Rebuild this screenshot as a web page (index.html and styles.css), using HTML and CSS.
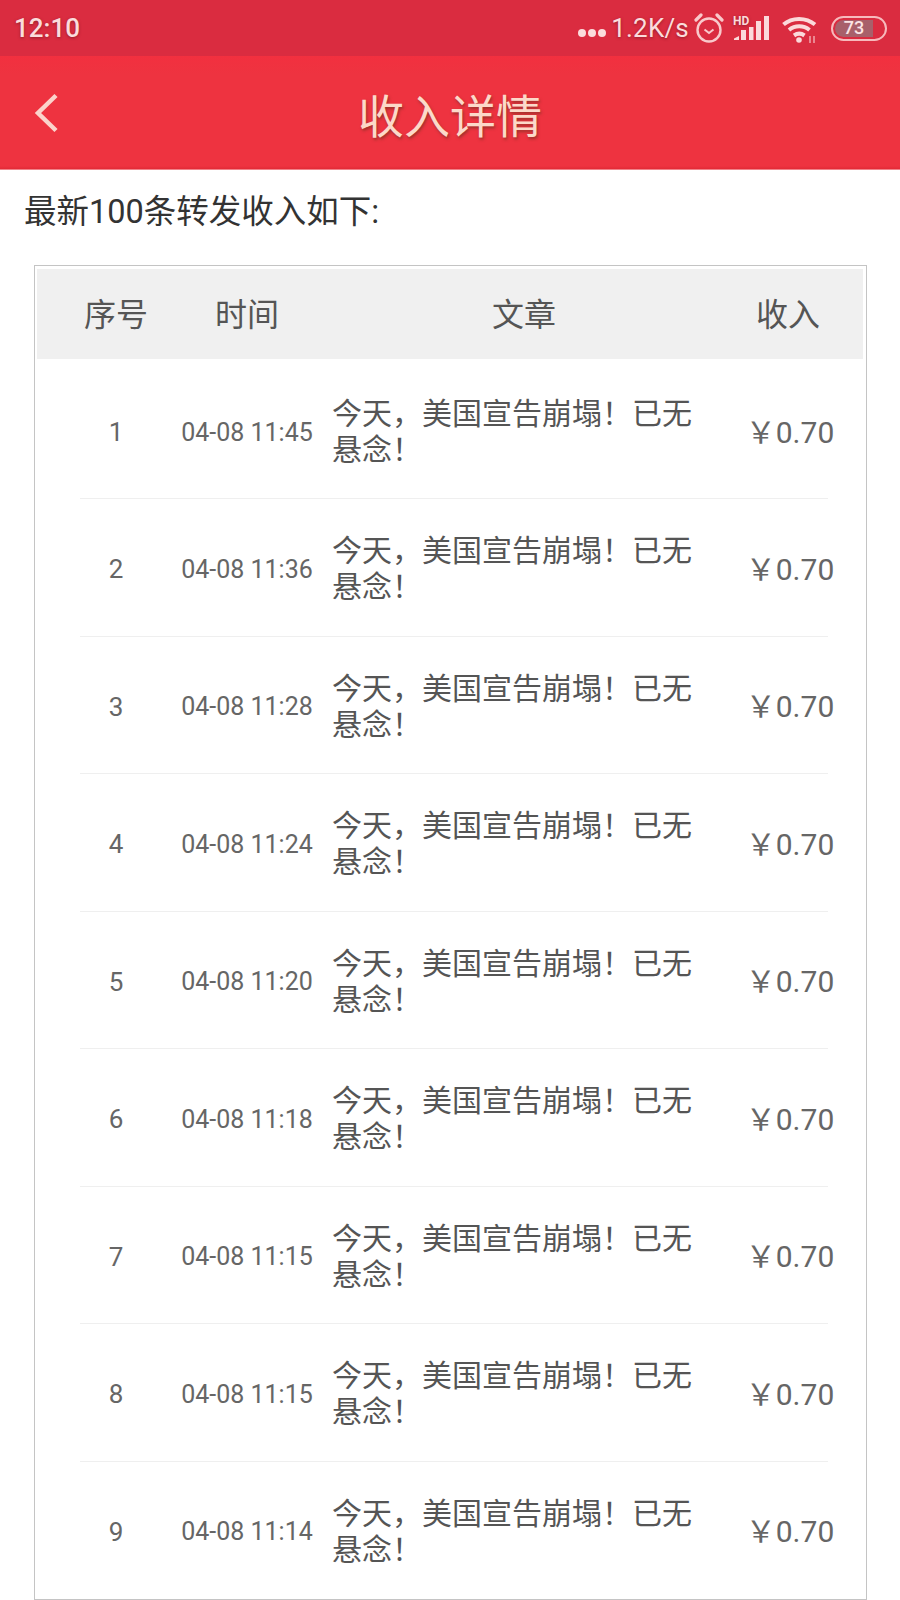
FILE: index.html
```html
<!DOCTYPE html>
<html lang="zh-CN">
<head>
<meta charset="utf-8">
<title>收入详情</title>
<link rel="stylesheet" href="styles.css">
</head>
<body>
<div class="page">
  <header class="statusbar">
    <span class="clock">12:10</span>
    <div class="status-right">
      <span class="dots"><i></i><i></i><i></i></span>
      <span class="speed">1.2K/s</span>
      <svg class="ico-alarm" width="30" height="32" viewBox="0 0 30 32" fill="none" stroke="#f9c9cb" stroke-width="2.4">
        <circle cx="15" cy="18" r="11.5"/>
        <path d="M10.5 17.5 15 21l4.500-3.500" stroke-width="2"/>
        <path d="M2 8 7 3M28 8 23 3" stroke-width="3.2" stroke-linecap="round"/>
      </svg>
      <svg class="ico-signal" width="37" height="26" viewBox="0 0 37 26" fill="#fbd9da">
        <text class="hd" x="0" y="10">HD</text>
        <path d="M1 25h5v-4l-5 2.500zM8 25h5V15H8zM16 25h4.500V12H16zM23 25h5V6h-5zM31 25h5V1h-5z"/>
      </svg>
      <svg class="ico-wifi" width="37" height="28" viewBox="0 0 37 28" fill="none" stroke="#fbd9da" stroke-width="4">
        <path d="M1.500 8.500C10 1 24 1 33 8.500"/>
        <path d="M7 14c6-5 14.500-5 20.500 0"/>
        <path d="M12 19.500c3.500-2.500 7-2.500 10.500 0"/>
        <circle cx="17" cy="24" r="2.800" fill="#fbd9da" stroke="none"/>
        <path d="M28 20v7M32 20v7" stroke-width="1.500" opacity=".7"/>
      </svg>
      <div class="battery"><span class="battery-level">73</span></div>
    </div>
  </header>

  <nav class="navbar">
    <svg class="back" width="30" height="40" viewBox="0 0 30 40" fill="none" stroke="#fbd3cb" stroke-width="4.500">
      <path d="M23 2.500 5 20l18 17.500"/>
    </svg>
    <h1 class="title">收入详情</h1>
  </nav>

  <p class="intro">最新100条转发收入如下:</p>

  <section class="table">
    <div class="thead">
      <span>序号</span>
      <span>时间</span>
      <span class="th-article">文章</span>
      <span class="th-income">收入</span>
    </div>

    <div class="row"><span class="num">1</span><span class="time">04-08 11:45</span><span class="article">今天&#xFF0C;美国宣告崩塌&#xFF01;已无悬念&#xFF01;</span><span class="money">&#xFFE5;0.70</span></div>
    <div class="sep"></div>
    <div class="row"><span class="num">2</span><span class="time">04-08 11:36</span><span class="article">今天&#xFF0C;美国宣告崩塌&#xFF01;已无悬念&#xFF01;</span><span class="money">&#xFFE5;0.70</span></div>
    <div class="sep"></div>
    <div class="row"><span class="num">3</span><span class="time">04-08 11:28</span><span class="article">今天&#xFF0C;美国宣告崩塌&#xFF01;已无悬念&#xFF01;</span><span class="money">&#xFFE5;0.70</span></div>
    <div class="sep"></div>
    <div class="row"><span class="num">4</span><span class="time">04-08 11:24</span><span class="article">今天&#xFF0C;美国宣告崩塌&#xFF01;已无悬念&#xFF01;</span><span class="money">&#xFFE5;0.70</span></div>
    <div class="sep"></div>
    <div class="row"><span class="num">5</span><span class="time">04-08 11:20</span><span class="article">今天&#xFF0C;美国宣告崩塌&#xFF01;已无悬念&#xFF01;</span><span class="money">&#xFFE5;0.70</span></div>
    <div class="sep"></div>
    <div class="row"><span class="num">6</span><span class="time">04-08 11:18</span><span class="article">今天&#xFF0C;美国宣告崩塌&#xFF01;已无悬念&#xFF01;</span><span class="money">&#xFFE5;0.70</span></div>
    <div class="sep"></div>
    <div class="row"><span class="num">7</span><span class="time">04-08 11:15</span><span class="article">今天&#xFF0C;美国宣告崩塌&#xFF01;已无悬念&#xFF01;</span><span class="money">&#xFFE5;0.70</span></div>
    <div class="sep"></div>
    <div class="row"><span class="num">8</span><span class="time">04-08 11:15</span><span class="article">今天&#xFF0C;美国宣告崩塌&#xFF01;已无悬念&#xFF01;</span><span class="money">&#xFFE5;0.70</span></div>
    <div class="sep"></div>
    <div class="row"><span class="num">9</span><span class="time">04-08 11:14</span><span class="article">今天&#xFF0C;美国宣告崩塌&#xFF01;已无悬念&#xFF01;</span><span class="money">&#xFFE5;0.70</span></div>
  </section>
</div>
</body>
</html>
```

FILE: styles.css
```css
* { box-sizing: border-box; }

html, body { margin: 0; padding: 0; }

body {
  background: #fff;
  font-family: Roboto, "Noto Sans CJK SC", sans-serif;
  color: #555;
}

.page {
  width: 900px;
  height: 1600px;
  overflow: hidden;
  display: flex;
  flex-direction: column;
}

.statusbar {
  height: 56px;
  flex: none;
  background: #da2c40;
  display: flex;
  align-items: center;
  justify-content: space-between;
  padding: 0 13px 0 14px;
  color: #fbdcdc;
  text-shadow: 0 1px 3px rgba(90, 20, 30, .55);
}

.clock { font-size: 26px; font-weight: 500; }

.status-right {
  display: flex;
  align-items: center;
}

.dots { display: flex; gap: 2px; margin: 10px 5px 0 0; }

.dots i {
  width: 8px;
  height: 8px;
  border-radius: 50%;
  background: #fbdcdc;
}

.speed { font-size: 26px; letter-spacing: .2px; margin-right: 5px; }

.ico-alarm { margin-right: 9px; }
.ico-signal { margin-right: 12px; overflow: visible; }
.ico-wifi { margin-right: 12px; margin-top: 4px; }

.hd {
  font-family: Roboto, sans-serif;
  font-size: 12px;
  font-weight: 700;
}

.battery {
  width: 56px;
  height: 25px;
  border: 2.5px solid #f7b9bc;
  border-radius: 13px;
  padding: 2px;
  display: flex;
}

.battery-level {
  width: 38px;
  background: #a8606a;
  border-radius: 9px 0 0 9px;
  color: #fbe4e4;
  font-size: 18px;
  font-weight: 500;
  line-height: 16px;
  text-align: center;
  text-shadow: none;
}

.navbar {
  height: 114px;
  flex: none;
  background: linear-gradient(#f2303f 0, #ee3340 18px, #ee3340 110px, #e22a36 113px, #ffd9dc 114px);
  display: grid;
  grid-template-columns: 1fr auto 1fr;
  align-items: center;
  padding-left: 33px;
}

.back { grid-column: 1; justify-self: start; margin-top: -1px; }

.title {
  grid-column: 2;
  margin: 0 0 0 -33px;
  font-family: "Noto Sans CJK SC", sans-serif;
  font-size: 46px;
  font-weight: 400;
  color: #fcd9c9;
  text-shadow: 1px 2px 3px rgba(110, 50, 30, .65);
}

.intro {
  margin: 0;
  height: 95px;
  flex: none;
  padding: 19px 0 0 24px;
  font-family: Roboto, "Noto Sans CJK SC", sans-serif;
  font-size: 32.500px;
  line-height: 46px;
  color: #333;
  white-space: nowrap;
}

.table {
  margin: 0 33px 0 34px;
  height: 1335px;
  flex: none;
  border: 1px solid #c4c4c4;
  padding-top: 3px;
  overflow: hidden;
}

.thead {
  height: 90px;
  margin: 0 3px 0 2px;
  background: #f0f0f0;
  display: grid;
  grid-template-columns: 88px 150px 382px 134px;
  column-gap: 12px;
  padding: 0 0 5px 35px;
  align-items: center;
  text-align: center;
  font-family: "Noto Sans CJK SC", sans-serif;
  font-size: 32px;
  color: #555;
}

.th-article { padding-right: 2px; }
.th-income { padding-right: 14px; }

.row {
  height: 136.500px;
  padding: 4px 0 0 37px;
  display: grid;
  grid-template-columns: 88px 150px 382px 134px;
  column-gap: 12px;
  align-items: center;
  text-align: center;
}

.thead + .row { height: 139px; padding-top: 7px; }

.num { font-size: 26px; color: #666; }

.time { font-size: 25px; color: #666; white-space: nowrap; }

.article {
  text-align: left;
  font-family: "Noto Sans CJK SC", sans-serif;
  font-size: 30px;
  line-height: 36px;
  color: #555;
  padding-bottom: 6px;
  margin-left: -2px;
}

.money { font-size: 30px; color: #666; padding: 0 10px 5px 0; white-space: nowrap; }

.sep {
  height: 1px;
  margin: 0 38px 0 45px;
  background: #efefef;
}
```
